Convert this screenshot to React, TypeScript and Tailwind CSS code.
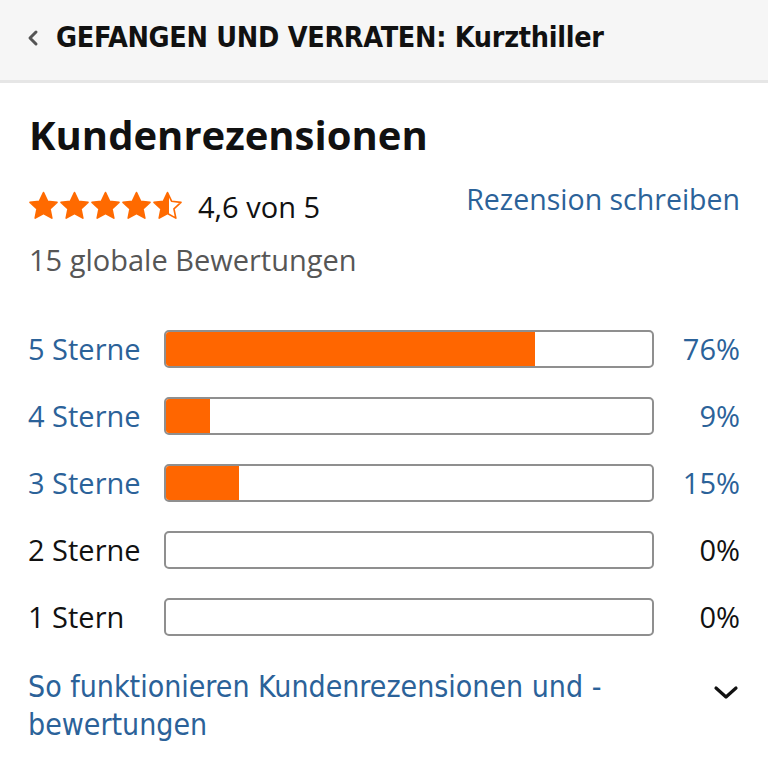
import React from "react";

const Star = ({ half = false, id }: { half?: boolean; id: string }) => (
  <svg width="31" height="29" viewBox="0 0 24 23">
    {half && (
      <defs>
        <linearGradient id={id} x1="0" x2="1" y1="0" y2="0">
          <stop offset="55%" stopColor="#ff6a00" />
          <stop offset="55%" stopColor="#ffffff" />
        </linearGradient>
      </defs>
    )}
    <path
      d="M12 1.2l3.2 6.9 7.5.9-5.6 5.1 1.5 7.4L12 17.8l-6.6 3.7 1.5-7.4L1.3 9l7.5-.9z"
      fill={half ? `url(#${id})` : "#ff6a00"}
      stroke="#ff6a00"
      strokeWidth="1.3"
      strokeLinejoin="round"
    />
  </svg>
);

const rows = [
  { label: "5 Sterne", pct: 76, link: true },
  { label: "4 Sterne", pct: 9, link: true },
  { label: "3 Sterne", pct: 15, link: true },
  { label: "2 Sterne", pct: 0, link: false },
  { label: "1 Stern", pct: 0, link: false },
];

const condensed = { fontFamily: '"DejaVu Sans Condensed", "Liberation Sans Narrow", "Roboto", sans-serif', fontStretch: "condensed" } as const;

export default function App() {
  return (
    <div
      className="w-[768px] h-[768px] bg-white overflow-hidden"
      style={{ fontFamily: '"Open Sans", "Noto Sans", sans-serif' }}
    >
      <div className="h-[83px] bg-[#f6f6f6] border-b-[3px] border-[#e6e6e6] flex items-center pl-[26px] pb-[4px]">
        <svg width="14" height="20" viewBox="0 0 14 20" className="mr-[16px]">
          <path d="M10 4L4 10 10 16" fill="none" stroke="#555" strokeWidth="3" strokeLinecap="round" strokeLinejoin="round" />
        </svg>
        <span className="text-[28.5px] font-bold text-[#111] tracking-[-0.3px]" style={condensed}>
          GEFANGEN UND VERRATEN: Kurzthiller
        </span>
      </div>

      <div className="px-[28px] pt-[26px]">
        <h1 className="text-[40px] leading-[52px] font-bold text-[#111] pl-[1px]">Kundenrezensionen</h1>

        <div className="flex items-center justify-between mt-[24px] h-[40px]">
          <div className="flex items-center">
            <div className="flex items-center">
              <Star id="a" />
              <Star id="b" />
              <Star id="c" />
              <Star id="d" />
              <Star half id="h" />
            </div>
            <span className="ml-[15px] text-[29px] text-[#111] leading-[40px] mt-[4px]">4,6 von 5</span>
          </div>
          <span className="text-[28.5px] text-[#2b6299] leading-[40px] -mt-[12px]">Rezension schreiben</span>
        </div>

        <div className="text-[29px] text-[#565656] leading-[40px] mt-[15px] pl-[1px]">15 globale Bewertungen</div>

        <div className="flex flex-col mt-[35px]">
          {rows.map((r) => (
            <div key={r.label} className="h-[67px] flex items-center">
              <span className={`w-[136px] text-[29px] ${r.link ? "text-[#2b6299]" : "text-[#111]"}`}>{r.label}</span>
              <div className="w-[490px] h-[38px] rounded-[5px] border-[2px] border-[#8f8f8f] bg-white overflow-hidden">
                <div className="h-full bg-[#ff6600]" style={{ width: `${r.pct}%` }} />
              </div>
              <span className={`flex-1 text-right text-[29px] ${r.link ? "text-[#2b6299]" : "text-[#111]"}`}>{r.pct}%</span>
            </div>
          ))}
        </div>

        <div className="flex items-start justify-between mt-[18px]">
          <span className="text-[30px] leading-[38px] text-[#2b6299] w-[620px]" style={condensed}>
            So funktionieren Kundenrezensionen und - bewertungen
          </span>
          <svg width="28" height="18" viewBox="0 0 28 18" className="mt-[16px] mr-[0px]">
            <path d="M4 4l10 9 10-9" fill="none" stroke="#111" strokeWidth="3.2" strokeLinecap="round" strokeLinejoin="round" />
          </svg>
        </div>
      </div>
    </div>
  );
}
